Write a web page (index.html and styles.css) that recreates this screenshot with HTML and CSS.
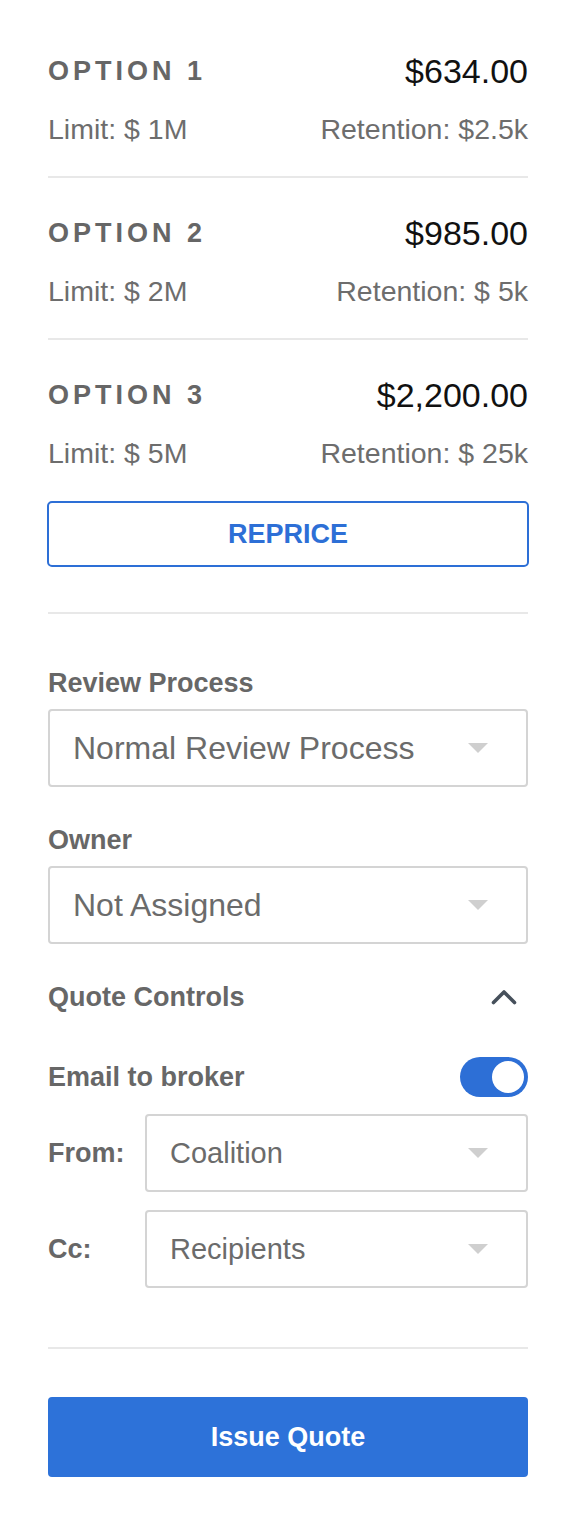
FILE: index.html
```html
<!DOCTYPE html>
<html lang="en">
<head>
<meta charset="utf-8">
<title>Quote Options</title>
<link rel="stylesheet" href="styles.css">
</head>
<body>
<div class="panel">
  <section class="options">
    <div class="option">
      <div class="option-head">
        <span class="option-name">OPTION 1</span>
        <span class="option-price">$634.00</span>
      </div>
      <div class="option-meta">
        <span>Limit: $ 1M</span>
        <span>Retention: $2.5k</span>
      </div>
    </div>
    <div class="option">
      <div class="option-head">
        <span class="option-name">OPTION 2</span>
        <span class="option-price">$985.00</span>
      </div>
      <div class="option-meta">
        <span>Limit: $ 2M</span>
        <span>Retention: $ 5k</span>
      </div>
    </div>
    <div class="option">
      <div class="option-head">
        <span class="option-name">OPTION 3</span>
        <span class="option-price">$2,200.00</span>
      </div>
      <div class="option-meta">
        <span>Limit: $ 5M</span>
        <span>Retention: $ 25k</span>
      </div>
    </div>
  </section>

  <button class="btn-outline" type="button">REPRICE</button>

  <hr class="divider">

  <div class="field">
    <div class="field-label">Review Process</div>
    <div class="select select-lg">
      <span>Normal Review Process</span>
      <span class="caret"></span>
    </div>
  </div>

  <div class="field">
    <div class="field-label">Owner</div>
    <div class="select select-lg">
      <span>Not Assigned</span>
      <span class="caret"></span>
    </div>
  </div>

  <div class="section-head">
    <span class="field-label">Quote Controls</span>
    <svg class="chevron" width="26" height="16" viewBox="0 0 26 16" aria-hidden="true">
      <path d="M2.5 13.5 L13 3 L23.5 13.5" fill="none" stroke="#46505b" stroke-width="3.6" stroke-linecap="round" stroke-linejoin="round"/>
    </svg>
  </div>

  <div class="toggle-row">
    <span class="field-label">Email to broker</span>
    <span class="toggle"><span class="knob"></span></span>
  </div>

  <div class="inline-field">
    <span class="inline-label">From:</span>
    <div class="select select-sm">
      <span>Coalition</span>
      <span class="caret"></span>
    </div>
  </div>
  <div class="inline-field">
    <span class="inline-label">Cc:</span>
    <div class="select select-sm">
      <span>Recipients</span>
      <span class="caret"></span>
    </div>
  </div>

  <hr class="divider divider-bottom">

  <button class="btn-primary" type="button">Issue Quote</button>
</div>
</body>
</html>
```

FILE: styles.css
```css
* {
  box-sizing: border-box;
}

html, body {
  margin: 0;
  padding: 0;
  background: #ffffff;
}

body {
  font-family: "Liberation Sans", Arial, sans-serif;
  color: #6b6b6b;
}

.panel {
  padding: 16px 48px 48px;
  display: flex;
  flex-direction: column;
}

.options {
  display: flex;
  flex-direction: column;
}

.option {
  padding: 35px 0 29px;
  border-bottom: 2px solid #e8e8e8;
}

.option:last-child {
  border-bottom: none;
  padding-bottom: 30px;
}

.option-head {
  display: flex;
  justify-content: space-between;
  align-items: center;
  height: 40px;
}

.option-name {
  font-size: 27px;
  font-weight: 700;
  letter-spacing: 4px;
  color: #666666;
}

.option-price {
  font-size: 34px;
  color: #111111;
}

.option-meta {
  display: flex;
  justify-content: space-between;
  align-items: center;
  height: 36px;
  margin-top: 20px;
  font-size: 28.5px;
  color: #6d6d6d;
}

.btn-outline {
  height: 66px;
  width: calc(100% + 2px);
  margin: 0 -1px;
  border: 2px solid #2d6fd6;
  border-radius: 5px;
  background: #ffffff;
  color: #2d6fd6;
  font-family: "Liberation Sans", Arial, sans-serif;
  font-size: 27px;
  font-weight: 700;
  padding: 0;
}

.divider {
  border: none;
  height: 2px;
  background: #e8e8e8;
  margin: 45px 0 0;
}

.field {
  display: flex;
  flex-direction: column;
  margin-top: 53px;
}

.field + .field {
  margin-top: 37px;
}

.field-label {
  font-size: 27px;
  font-weight: 700;
  line-height: 32px;
  color: #676767;
}

.select {
  display: flex;
  align-items: center;
  justify-content: space-between;
  border: 2px solid #d4d4d4;
  border-radius: 4px;
  height: 78px;
  padding: 0 38px 0 23px;
  color: #6b6b6b;
}

.select-lg {
  margin-top: 10px;
  font-size: 32px;
}

.select-sm {
  flex: 1;
  font-size: 29px;
}

.caret {
  width: 0;
  height: 0;
  border-left: 10px solid transparent;
  border-right: 10px solid transparent;
  border-top: 10px solid #cfcfcf;
}

.section-head {
  display: flex;
  justify-content: space-between;
  align-items: center;
  margin-top: 37px;
  height: 32px;
}

.chevron {
  margin-right: 11px;
}

.toggle-row {
  display: flex;
  justify-content: space-between;
  align-items: center;
  margin-top: 44px;
  height: 40px;
}

.toggle {
  position: relative;
  width: 68px;
  height: 40px;
  border-radius: 20px;
  background: #2d6fd6;
}

.toggle .knob {
  position: absolute;
  right: 4px;
  top: 4px;
  width: 32px;
  height: 32px;
  border-radius: 50%;
  background: #ffffff;
}

.inline-field {
  display: flex;
  align-items: center;
  margin-top: 17px;
}

.inline-field + .inline-field {
  margin-top: 18px;
}

.inline-label {
  width: 97px;
  flex: none;
  font-size: 27px;
  font-weight: 700;
  color: #676767;
}

.divider-bottom {
  margin-top: 59px;
}

.btn-primary {
  margin-top: 48px;
  height: 80px;
  border: none;
  border-radius: 4px;
  background: #2d72d9;
  color: #ffffff;
  font-family: "Liberation Sans", Arial, sans-serif;
  font-size: 27px;
  font-weight: 700;
  padding: 0;
}
```
